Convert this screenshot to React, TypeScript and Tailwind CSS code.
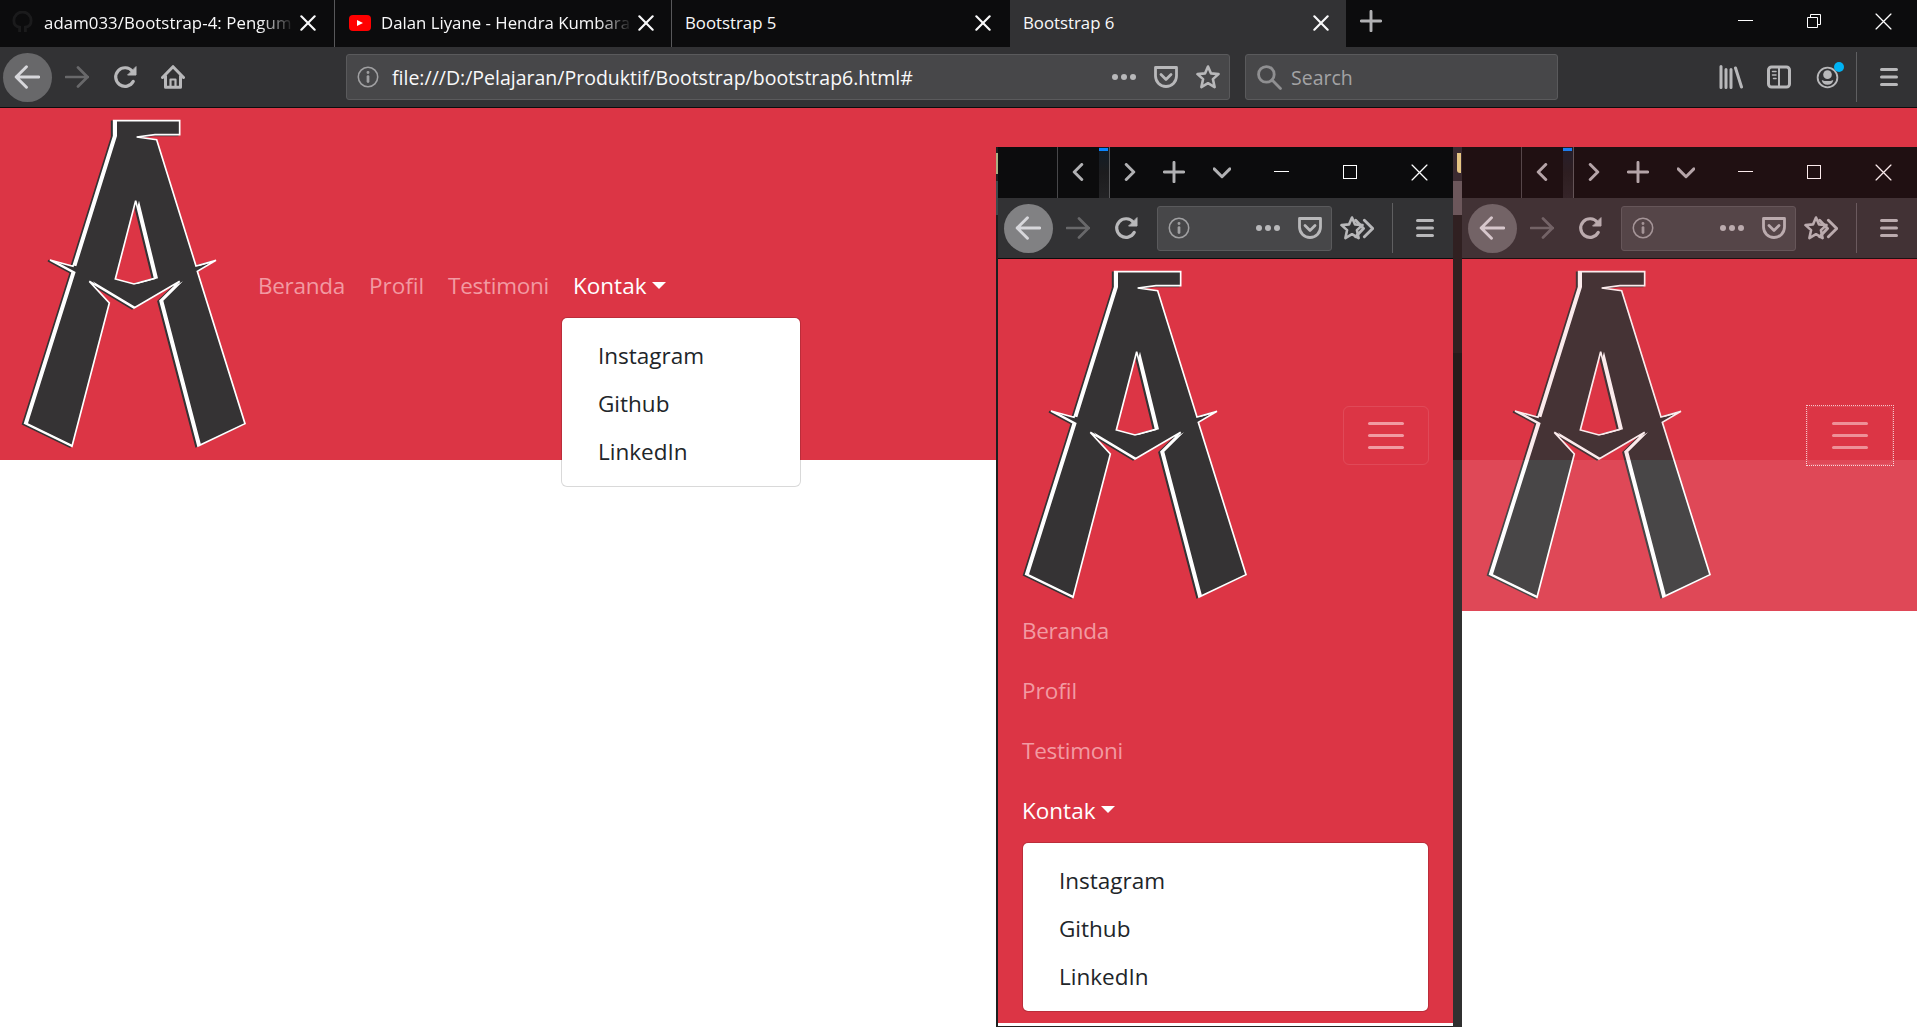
import React from "react";

type Kids = { children?: React.ReactNode; className?: string };

const Icon = ({ children, className = "", size = 24, w = 2.4 }: Kids & { size?: number; w?: number }) => (
  <svg
    width={size}
    height={size}
    viewBox="0 0 24 24"
    fill="none"
    stroke="currentColor"
    strokeWidth={w}
    strokeLinecap="round"
    strokeLinejoin="round"
    className={"shrink-0 " + className}
  >
    {children}
  </svg>
);

const Slot = ({ children, className = "" }: Kids) => (
  <div className={"flex shrink-0 items-center justify-center " + className}>{children}</div>
);

const BackIcon = () => (
  <Icon size={26} w={2.7} className="mr-px">
    <path d="M23 12H2M11.5 2.5 2 12l9.5 9.5" />
  </Icon>
);
const ForwardIcon = () => (
  <Icon w={2.7} className="mr-px">
    <path d="M1 12h22M13 2.5l9.5 9.5-9.5 9.5" />
  </Icon>
);
const ReloadIcon = () => (
  <Icon w={3.2} className="mr-[2px]">
    <path d="M20.3 16.3A9.3 9.3 0 1 1 19.4 6.4" />
    <path d="M23 2v8h-8z" fill="currentColor" strokeWidth={1} />
  </Icon>
);
const HomeIcon = () => (
  <Icon w={3} className="mr-[2px]">
    <path d="M1.5 12.5 12 1.7l10.500 10.800M4.500 11v11.200h15V11" />
    <path d="M9.500 22v-7.500h5V22" strokeWidth={2.200} />
  </Icon>
);
const InfoIcon = () => (
  <Icon size={22} w={1.7}>
    <circle cx="12" cy="12" r="10.6" />
    <path d="M12 11.500v5.500" strokeWidth={3} />
    <circle cx="12" cy="7" r="0.700" strokeWidth={1.800} />
  </Icon>
);
const DotsIcon = () => (
  <Icon>
    <g fill="currentColor" stroke="none">
      <circle cx="3" cy="12" r="3" />
      <circle cx="12" cy="12" r="3" />
      <circle cx="21" cy="12" r="3" />
    </g>
  </Icon>
);
const PocketIcon = () => (
  <Icon w={2.800}>
    <path d="M1.500 2.500h21v8.500a10.500 10.500 0 0 1-21 0z" />
    <path d="M7 9.500l5 5 5-5" />
  </Icon>
);
const StarIcon = () => (
  <Icon w={2.600}>
    <path d="M12 1.500l3 6.900 7.500.7-5.600 5 1.700 8L12 18.200 5.400 22.100l1.700-8-5.600-5 7.500-.7z" />
  </Icon>
);
const MenuIcon = () => (
  <Icon size={18} w={4}>
    <path d="M2 2h20M2 12h20M2 22h20" />
  </Icon>
);
const LibraryIcon = () => (
  <Icon w={3}>
    <path d="M2 1.500v21M7 4.500v18M12 4.500v18M16.500 3l6 19" />
  </Icon>
);
const SidebarIcon = () => (
  <Icon w={3}>
    <rect x="1.500" y="2" width="21" height="20" rx="3" />
    <path d="M12 2v20" strokeWidth={2} />
    <path d="M5.500 6.500h3.500M5.500 10h3.500M6.500 13.500h2.500" strokeWidth={1.500} />
  </Icon>
);
const AccountIcon = () => (
  <Icon size={23} w={1.900}>
    <circle cx="12" cy="12" r="10.300" />
    <circle cx="12" cy="9" r="4.500" fill="currentColor" stroke="none" />
    <path d="M6 14.500c3.600 1.700 8.400 1.700 12 0-.3 3.200-2.600 5-6 5s-5.700-1.800-6-5z" fill="currentColor" stroke="none" />
  </Icon>
);
const SearchIcon = () => (
  <Icon size={25} w={2.700}>
    <circle cx="9" cy="9" r="7.500" />
    <path d="M14.500 14.500 22.500 22.500" />
  </Icon>
);
const TabClose = () => (
  <Icon size={16} w={3.200}>
    <path d="M2 2l20 20M22 2 2 22" />
  </Icon>
);
const PlusIcon = () => (
  <Icon size={22} w={3.200}>
    <path d="M12 1.500v21M1.500 12h21" />
  </Icon>
);
const WinMin = () => (
  <svg width={16} height={16} viewBox="0 0 16 16" stroke="currentColor" strokeWidth={1}>
    <path d="M0 7.500h15" />
  </svg>
);
const WinClose = () => (
  <Icon size={17} w={1.800}>
    <path d="M1.500 1.500l21 21M22.500 1.500l-21 21" />
  </Icon>
);

const A_SHAPE =
  "M341 62H539V104H465L410 111L470 119L588 498L648 481L592 514L735 971L594 1038L480 602L539 544L402 624L268 544L328 609L216 1039L74 970L217 516L150 480L219 499L341 108ZM407 302L346 537L402 552L464 535Z";

const Logo = () => (
  <svg width={270} height={352} viewBox="0 24 810 1056" className="block shrink-0" strokeLinejoin="miter">
    <defs>
      <clipPath id="letter-inner">
        <path d={A_SHAPE} clipRule="evenodd" />
      </clipPath>
    </defs>
    <path d={A_SHAPE} fillRule="evenodd" fill="#353334" stroke="#353334" strokeWidth={5} transform="translate(-6 2)" />
    <path d={A_SHAPE} fillRule="evenodd" fill="#fff" />
    <g clipPath="url(#letter-inner)">
      <path d={A_SHAPE} fillRule="evenodd" fill="#353334" transform="translate(10 0)" />
    </g>
    <path d={A_SHAPE} fill="none" stroke="#fff" strokeWidth={5} strokeMiterlimit={3} />
  </svg>
);

const Caret = () => (
  <span className="mb-[4px] ml-[6px] inline-block border-x-[7px] border-t-[7px] border-x-transparent border-t-white align-middle" />
);

const contacts = ["Instagram", "Github", "LinkedIn"];

const Dropdown = ({ className = "" }: Kids) => (
  <ul
    className={
      "rounded-[6px] border border-black/15 bg-white bg-clip-padding pt-[14px] pb-[10px] text-[#212529] " + className
    }
  >
    {contacts.map((c) => (
      <li key={c} className="flex h-12 items-center pl-[36px]">
        {c}
      </li>
    ))}
  </ul>
);

const Tab = ({ children, className = "" }: Kids) => (
  <div className={"flex h-full shrink-0 items-center pb-[2px] text-[16.8px] text-[#f9f9fa] " + className}>
    {children}
  </div>
);

function MainWindow() {
  return (
    <div className="flex h-full w-full flex-col bg-white">
      <header className="flex h-[47px] shrink-0 bg-[#0c0c0d]">
        <Tab className="w-[335px] border-r border-[#58585a] pl-[11px]">
          <svg width={23} height={23} viewBox="0 0 24 24" fill="none" stroke="#1b1b1c" strokeWidth={3} className="shrink-0">
            <path d="M9 22v-5c-4-.5-6-3-6-7a9 9 0 0 1 18 0c0 4-2 6.500-6 7v5" />
          </svg>
          <span className="ml-[10px] w-[248px] whitespace-nowrap tracking-[0.08px] [mask-image:linear-gradient(to_right,#000_87%,transparent_101%)]">
            adam033/Bootstrap-4: Pengum
          </span>
          <span className="ml-[8px]"><TabClose /></span>
        </Tab>
        <Tab className="w-[337px] border-r border-[#58585a] pl-[14px]">
          <span className="flex h-[16px] w-[22px] items-center justify-center rounded-[4px] bg-[#f00]">
            <span className="border-y-[3.500px] border-l-[6px] border-y-transparent border-l-white" />
          </span>
          <span className="ml-[10px] w-[249px] whitespace-nowrap [mask-image:linear-gradient(to_right,#000_87%,transparent_101%)]">
            Dalan Liyane - Hendra Kumbara
          </span>
          <span className="ml-[8px]"><TabClose /></span>
        </Tab>
        <Tab className="w-[338px] pl-[13px]">
          <span className="w-[290px]">Bootstrap 5</span>
          <TabClose />
        </Tab>
        <Tab className="w-[336px] bg-[#323234] pl-[13px]">
          <span className="w-[290px]">Bootstrap 6</span>
          <TabClose />
        </Tab>
        <Slot className="h-[42px] w-[50px] text-[#b1b1b3]"><PlusIcon /></Slot>
        <div className="flex h-[42px] flex-1 justify-end text-white">
          <Slot className="w-[69px]"><WinMin /></Slot>
          <Slot className="w-[69px]">
            <svg width={16} height={16} viewBox="0 0 16 16" fill="none" stroke="#fff" strokeWidth={1} className="mr-[2px]">
              <path d="M1.500 4.500h10v10h-10zM4.500 4V1.500h10v10H12" />
            </svg>
          </Slot>
          <Slot className="w-[68px]"><WinClose /></Slot>
        </div>
      </header>

      <div className="flex h-[61px] shrink-0 items-center border-b border-[#0c0c0d] bg-[#323234] text-[#b8b8ba]">
        <Slot className="ml-[3px] size-[49px] rounded-full bg-[#68686a] text-[#d7d7db]"><BackIcon /></Slot>
        <Slot className="w-[50px] text-[#68686a]"><ForwardIcon /></Slot>
        <Slot className="w-[48px]"><ReloadIcon /></Slot>
        <Slot className="w-[47px]"><HomeIcon /></Slot>
        <div className="ml-[149px] flex h-[46px] w-[884px] items-center rounded-[3px] border border-[#5a5a5c] bg-[#474749] pl-[10px]">
          <span className="text-[#a0a0a2]"><InfoIcon /></span>
          <span className="ml-[13px] flex-1 pt-px text-[19.500px] whitespace-nowrap text-[#f9f9fa]">
            file:///D:/Pelajaran/Produktif/Bootstrap/bootstrap6.html#
          </span>
          <Slot className="w-[42px]"><DotsIcon /></Slot>
          <Slot className="w-[42px]"><PocketIcon /></Slot>
          <Slot className="w-[42px]"><StarIcon /></Slot>
        </div>
        <div className="ml-[15px] flex h-[46px] w-[313px] items-center rounded-[3px] border border-[#5a5a5c] bg-[#474749] pl-[11px] text-[19.500px] text-[#a3a3a5]">
          <span className="text-[#8f8f91]"><SearchIcon /></span>
          <span className="ml-[9px] pt-[2px]">Search</span>
        </div>
        <div className="flex flex-1 items-center justify-end">
          <Slot className="w-[48px]"><LibraryIcon /></Slot>
          <Slot className="w-[48px]"><SidebarIcon /></Slot>
          <Slot className="relative w-[48px]">
            <AccountIcon />
            <span className="absolute top-[-4px] right-[7px] size-[10px] rounded-full bg-[#00b3f4]" />
          </Slot>
          <div className="ml-[5px] h-[50px] w-px bg-[#5f5f61]" />
          <Slot className="mr-[18px] ml-[22px] w-[20px]"><MenuIcon /></Slot>
        </div>
      </div>

      <nav className="flex h-[352px] shrink-0 items-center bg-[#dc3545] text-[22.500px] text-[#f29aa2]">
        <Logo />
        <div className="-ml-[12px] flex items-center gap-[24px] pt-[3px] whitespace-nowrap">
          <span className="w-[87px] tracking-[-0.3px]">Beranda</span>
          <span className="w-[55px]">Profil</span>
          <span className="w-[101px] tracking-[-0.25px]">Testimoni</span>
          <div className="relative text-white">
            Kontak
            <Caret />
            <Dropdown className="absolute top-[48px] left-[-12px] w-[240px]" />
          </div>
        </div>
      </nav>
    </div>
  );
}

function NarrowWindow({ open = false, className = "" }: { open?: boolean; className?: string }) {
  return (
    <section className={"flex flex-col bg-white " + className}>
      <header className="flex h-[51px] shrink-0 items-center bg-[#0c0c0d] text-[#b1b1b3]">
        <div className="h-full w-[60px] border-r border-[#48484a]" />
        <Slot className="w-[41px]">
          <Icon size={18} w={4} className="mr-[2px] mb-px"><path d="M17 2 7 12l10 10" /></Icon>
        </Slot>
        <div className="h-full w-[11px] border-r border-[#58585a] bg-linear-to-b from-[#101c28] via-[#1c1c1e] to-[#232325] pt-px">
          <div className="h-[3px] w-[9px] bg-[#0a84ff]" />
        </div>
        <Slot className="w-[40px]">
          <Icon size={18} w={4} className="mb-px"><path d="M7 2l10 10L7 22" /></Icon>
        </Slot>
        <Slot className="w-[48px] pb-px"><PlusIcon /></Slot>
        <Slot className="w-[48px]">
          <Icon size={18} w={4}><path d="M1.500 6.500 12 17 22.500 6.500" /></Icon>
        </Slot>
        <div className="flex flex-1 justify-end pb-px text-white">
          <Slot className="w-[69px]"><WinMin /></Slot>
          <Slot className="w-[69px]"><span className="mr-px size-[14px] border border-white" /></Slot>
          <Slot className="w-[68px]"><WinClose /></Slot>
        </div>
      </header>
      <div className="flex h-[61px] shrink-0 items-center border-b border-[#0c0c0d] bg-[#323234] text-[#b8b8ba]">
        <Slot className={"ml-[6px] size-[49px] rounded-full text-[#d7d7db] " + (open ? "bg-[#818183]" : "bg-[#68686a]")}>
          <BackIcon />
        </Slot>
        <Slot className="w-[50px] text-[#68686a]"><ForwardIcon /></Slot>
        <Slot className="w-[48px]"><ReloadIcon /></Slot>
        <div className="ml-[6px] flex h-[45px] w-[175px] items-center justify-between rounded-[3px] border border-[#5a5a5c] bg-[#474749] pr-[9px] pl-[10px]">
          <span className="text-[#a0a0a2]"><InfoIcon /></span>
          <div className="flex gap-[18px]"><DotsIcon /><PocketIcon /></div>
        </div>
        <div className="ml-[8px] flex items-center">
          <StarIcon />
          <Icon size={21} w={3.300} className="-ml-[11px]">
            <path d="M3 2.500 12 12 3 21.500M13 2.500l9.500 9.500-9.500 9.500" />
          </Icon>
        </div>
        <div className="flex flex-1 items-center justify-end">
          <div className="h-[50px] w-px bg-[#5f5f61]" />
          <Slot className="mr-[18px] ml-[22px] w-[20px]"><MenuIcon /></Slot>
        </div>
      </div>
      <nav className="bg-[#dc3545] text-[22.500px] text-[#f29aa2]">
        <div className="flex h-[352px] items-center justify-between pl-[3px]">
          <Logo />
          <div className={"mr-[23px] border border-dotted " + (open ? "border-transparent" : "border-white/80")}>
            <div className="flex h-[59px] w-[86px] flex-col items-center justify-center gap-[9px] rounded-[6px] border border-white/10">
              <span className="h-[3px] w-[36px] rounded-full bg-[#f19aa2]" />
              <span className="h-[3px] w-[36px] rounded-full bg-[#f19aa2]" />
              <span className="h-[3px] w-[36px] rounded-full bg-[#f19aa2]" />
            </div>
          </div>
        </div>
        {open && (
          <div className="-mt-[10px] h-[422px] px-[24px]">
            <div className="flex h-[60px] items-center tracking-[-0.3px]">Beranda</div>
            <div className="flex h-[60px] items-center">Profil</div>
            <div className="flex h-[60px] items-center tracking-[-0.25px]">Testimoni</div>
            <div className="flex h-[60px] items-center text-white">Kontak<Caret /></div>
            <Dropdown className="mt-px w-[407px]" />
          </div>
        )}
      </nav>
    </section>
  );
}

export default function App() {
  return (
    <main className="relative h-[1027px] w-[1917px] overflow-hidden font-['Open_Sans',sans-serif]">
      <MainWindow />
      <div className="absolute top-[147px] left-[996px] flex h-[880px] w-[921px]">
        <div className="flex w-[2px] flex-col bg-[#1d1f1f]">
          <div className="mt-[6px] h-[21px] bg-[#a9b183]" />
          <div className="mt-[7px] h-[34px] bg-[#3d4a4c]" />
        </div>
        <NarrowWindow open className="w-[455px] border-b border-[#222]" />
        <div className="flex w-[9px] flex-col bg-[#303030]">
          <div className="h-[34px] bg-[#3b2a30] pt-[6px] pl-[4px]">
            <div className="h-[20px] w-[4px] rounded-bl-[3px] bg-[#e6c583]" />
          </div>
          <div className="h-[34px] bg-[#6c575b]" />
          <div className="h-[138px] bg-[#302021]" />
          <div className="h-[107px] bg-[#261b1b]" />
        </div>
        <NarrowWindow className="w-[455px] opacity-90" />
      </div>
    </main>
  );
}
